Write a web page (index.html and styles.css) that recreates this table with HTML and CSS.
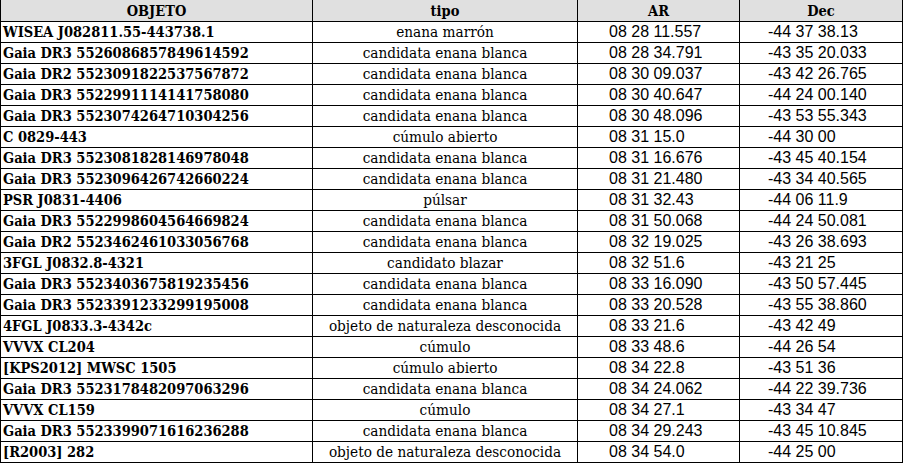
FILE: index.html
```html
<!DOCTYPE html>
<html lang="es">
<head>
<meta charset="utf-8">
<title>Objetos</title>
<link rel="stylesheet" href="styles.css">
</head>
<body>
<table class="tabla">
  <colgroup>
    <col class="c-obj">
    <col class="c-tipo">
    <col class="c-ar">
    <col class="c-dec">
  </colgroup>
  <thead>
    <tr><th>OBJETO</th><th>tipo</th><th>AR</th><th>Dec</th></tr>
  </thead>
  <tbody>
    <tr><td class="obj">WISEA J082811.55-443738.1</td><td class="tipo">enana marrón</td><td class="ar">08 28 11.557</td><td class="dec">-44 37 38.13</td></tr>
    <tr><td class="obj">Gaia DR3 5526086857849614592</td><td class="tipo">candidata enana blanca</td><td class="ar">08 28 34.791</td><td class="dec">-43 35 20.033</td></tr>
    <tr><td class="obj">Gaia DR2 5523091822537567872</td><td class="tipo">candidata enana blanca</td><td class="ar">08 30 09.037</td><td class="dec">-43 42 26.765</td></tr>
    <tr><td class="obj">Gaia DR3 5522991114141758080</td><td class="tipo">candidata enana blanca</td><td class="ar">08 30 40.647</td><td class="dec">-44 24 00.140</td></tr>
    <tr><td class="obj">Gaia DR3 5523074264710304256</td><td class="tipo">candidata enana blanca</td><td class="ar">08 30 48.096</td><td class="dec">-43 53 55.343</td></tr>
    <tr><td class="obj">C 0829-443</td><td class="tipo">cúmulo abierto</td><td class="ar">08 31 15.0</td><td class="dec">-44 30 00</td></tr>
    <tr><td class="obj">Gaia DR3 5523081828146978048</td><td class="tipo">candidata enana blanca</td><td class="ar">08 31 16.676</td><td class="dec">-43 45 40.154</td></tr>
    <tr><td class="obj">Gaia DR3 5523096426742660224</td><td class="tipo">candidata enana blanca</td><td class="ar">08 31 21.480</td><td class="dec">-43 34 40.565</td></tr>
    <tr><td class="obj">PSR J0831-4406</td><td class="tipo">púlsar</td><td class="ar">08 31 32.43</td><td class="dec">-44 06 11.9</td></tr>
    <tr><td class="obj">Gaia DR3 5522998604564669824</td><td class="tipo">candidata enana blanca</td><td class="ar">08 31 50.068</td><td class="dec">-44 24 50.081</td></tr>
    <tr><td class="obj">Gaia DR2 5523462461033056768</td><td class="tipo">candidata enana blanca</td><td class="ar">08 32 19.025</td><td class="dec">-43 26 38.693</td></tr>
    <tr><td class="obj">3FGL J0832.8-4321</td><td class="tipo">candidato blazar</td><td class="ar">08 32 51.6</td><td class="dec">-43 21 25</td></tr>
    <tr><td class="obj">Gaia DR3 5523403675819235456</td><td class="tipo">candidata enana blanca</td><td class="ar">08 33 16.090</td><td class="dec">-43 50 57.445</td></tr>
    <tr><td class="obj">Gaia DR3 5523391233299195008</td><td class="tipo">candidata enana blanca</td><td class="ar">08 33 20.528</td><td class="dec">-43 55 38.860</td></tr>
    <tr><td class="obj">4FGL J0833.3-4342c</td><td class="tipo">objeto de naturaleza desconocida</td><td class="ar">08 33 21.6</td><td class="dec">-43 42 49</td></tr>
    <tr><td class="obj">VVVX CL204</td><td class="tipo">cúmulo</td><td class="ar">08 33 48.6</td><td class="dec">-44 26 54</td></tr>
    <tr><td class="obj">[KPS2012] MWSC 1505</td><td class="tipo">cúmulo abierto</td><td class="ar">08 34 22.8</td><td class="dec">-43 51 36</td></tr>
    <tr><td class="obj">Gaia DR3 5523178482097063296</td><td class="tipo">candidata enana blanca</td><td class="ar">08 34 24.062</td><td class="dec">-44 22 39.736</td></tr>
    <tr><td class="obj">VVVX CL159</td><td class="tipo">cúmulo</td><td class="ar">08 34 27.1</td><td class="dec">-43 34 47</td></tr>
    <tr><td class="obj">Gaia DR3 5523399071616236288</td><td class="tipo">candidata enana blanca</td><td class="ar">08 34 29.243</td><td class="dec">-43 45 10.845</td></tr>
    <tr><td class="obj">[R2003] 282</td><td class="tipo">objeto de naturaleza desconocida</td><td class="ar">08 34 54.0</td><td class="dec">-44 25 00</td></tr>
  </tbody>
</table>
</body>
</html>
```
FILE: styles.css
```css
html, body {
  margin: 0;
  padding: 0;
  background: #ffffff;
}

.tabla {
  border-collapse: collapse;
  table-layout: fixed;
  width: 902px;
  color: #000;
}

.c-obj { width: 312px; }
.c-tipo { width: 265px; }
.c-ar { width: 162px; }
.c-dec { width: 163px; }

.tabla th,
.tabla td {
  border: 1px solid #000;
  padding: 0;
  height: 20px;
  line-height: 20px;
  white-space: nowrap;
  overflow: hidden;
  vertical-align: middle;
}

.tabla th {
  border-top: none;
  height: 21px;
  background: #e0e0e0;
  font-family: "DejaVu Serif Condensed", "DejaVu Serif", serif;
  font-stretch: condensed;
  font-weight: bold;
  font-size: 14.5px;
  text-align: center;
}

.obj {
  font-family: "DejaVu Serif Condensed", "DejaVu Serif", serif;
  font-stretch: condensed;
  font-weight: bold;
  font-size: 14.5px;
  text-align: left;
  padding-left: 2px !important;
}

.tipo {
  font-family: "DejaVu Serif Condensed", "DejaVu Serif", serif;
  font-stretch: condensed;
  font-size: 15.2px;
  text-align: center;
}

.ar {
  font-family: "Liberation Sans", Arial, sans-serif;
  font-size: 16px;
  text-align: left;
  padding-left: 31px !important;
}

.dec {
  font-family: "Liberation Sans", Arial, sans-serif;
  font-size: 16px;
  text-align: left;
  padding-left: 28px !important;
}
```
